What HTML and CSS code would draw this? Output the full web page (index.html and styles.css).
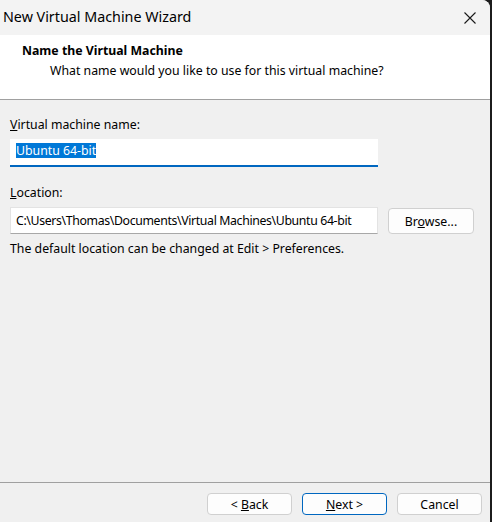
FILE: index.html
```html
<!DOCTYPE html>
<html lang="en">
<head>
  <meta charset="UTF-8">
  <meta name="viewport" content="width=device-width, initial-scale=1.0">
  <title>New Virtual Machine Wizard</title>
  <link rel="stylesheet" href="styles.css">
</head>
<body>
  <div class="window">
    <div class="titlebar">
      <span class="title">New Virtual Machine Wizard</span>
      <div class="close">
        <svg width="12" height="12" viewBox="0 0 12 12">
          <path d="M0.5 0.5 L11.5 11.5 M11.5 0.5 L0.5 11.5" stroke="#1a1a1a" stroke-width="1.1" fill="none"/>
        </svg>
      </div>
    </div>

    <div class="header">
      <h2>Name the Virtual Machine</h2>
      <p>What name would you like to use for this virtual machine?</p>
    </div>

    <div class="content">
      <div class="label"><u>V</u>irtual machine name:</div>
      <div class="name-field"><span class="selected">Ubuntu 64-bit</span></div>

      <div class="label location-label"><u>L</u>ocation:</div>
      <div class="location-row">
        <div class="path-field">C:\Users\Thomas\Documents\Virtual Machines\Ubuntu 64-bit</div>
        <div class="btn browse"><span>Br<u>o</u>wse...</span></div>
      </div>
      <div class="hint">The default location can be changed at Edit &gt; Preferences.</div>
    </div>

    <div class="footer">
      <div class="btn"><span>&lt; <u>B</u>ack</span></div>
      <div class="btn default"><span><u>N</u>ext &gt;</span></div>
      <div class="btn"><span>Cancel</span></div>
    </div>
  </div>
</body>
</html>
```

FILE: styles.css
```css
body {
  margin: 0;
  background-color: #1c1c1c;
  font-family: "Noto Sans", "Open Sans", sans-serif;
  font-size: 12.3px;
  color: #000;
}
.window {
  width: 490px;
  height: 522px;
  background-color: #f0f0f0;
  border-top-right-radius: 8px;
  overflow: hidden;
  display: flex;
  flex-direction: column;
}
.titlebar {
  height: 35px;
  background-color: #f3f3f3;
  display: flex;
  align-items: center;
  justify-content: space-between;
  padding-left: 3px;
  padding-right: 14px;
}
.title {
  font-size: 14.3px;
  line-height: 20px;
  margin-top: -2px;
}
.close {
  display: flex;
  width: 12px;
  height: 12px;
}
.header {
  box-sizing: border-box;
  height: 65px;
  background-color: #fff;
  border-bottom: 1px solid #a0a0a0;
  padding: 8px 0 0 22px;
}
.header h2 {
  margin: 0;
  font-size: 12.3px;
  font-weight: bold;
  line-height: 16px;
}
.header p {
  margin: 4px 0 0 28px;
  line-height: 16px;
}
.content {
  flex: 1;
  padding: 17px 16px 0 10px;
}
.label {
  line-height: 16px;
}
.name-field {
  margin-top: 6px;
  width: 368px;
  height: 28px;
  box-sizing: border-box;
  background-color: #fff;
  border-bottom: 2px solid #0067c0;
  padding: 3px 0 0 6px;
}
.selected {
  display: inline-block;
  background-color: #0078d7;
  color: #fff;
  line-height: 15px;
}
.location-label {
  margin-top: 18px;
}
.location-row {
  margin-top: 6px;
  display: flex;
  align-items: flex-start;
  gap: 10px;
}
.path-field {
  width: 368px;
  height: 27px;
  box-sizing: border-box;
  background-color: #fff;
  border: 1px solid #e3e3e3;
  border-bottom-color: #a8a8a8;
  padding-left: 5px;
  display: flex;
  align-items: center;
  white-space: nowrap;
  letter-spacing: -0.36px;
}
.btn {
  width: 85px;
  height: 22px;
  box-sizing: border-box;
  background-color: #fdfdfd;
  border: 1px solid #d0d0d0;
  border-radius: 4px;
  display: flex;
  align-items: center;
  justify-content: center;
}
.browse {
  width: 86px;
  height: 26px;
  margin-top: 1px;
}
.hint {
  margin-top: 7px;
  line-height: 16px;
}
.footer {
  border-top: 1px solid #a0a0a0;
  padding: 10px 8px 7px 0;
  display: flex;
  justify-content: flex-end;
  gap: 10px;
}
.btn.default {
  border-color: #0067c0;
}
```
